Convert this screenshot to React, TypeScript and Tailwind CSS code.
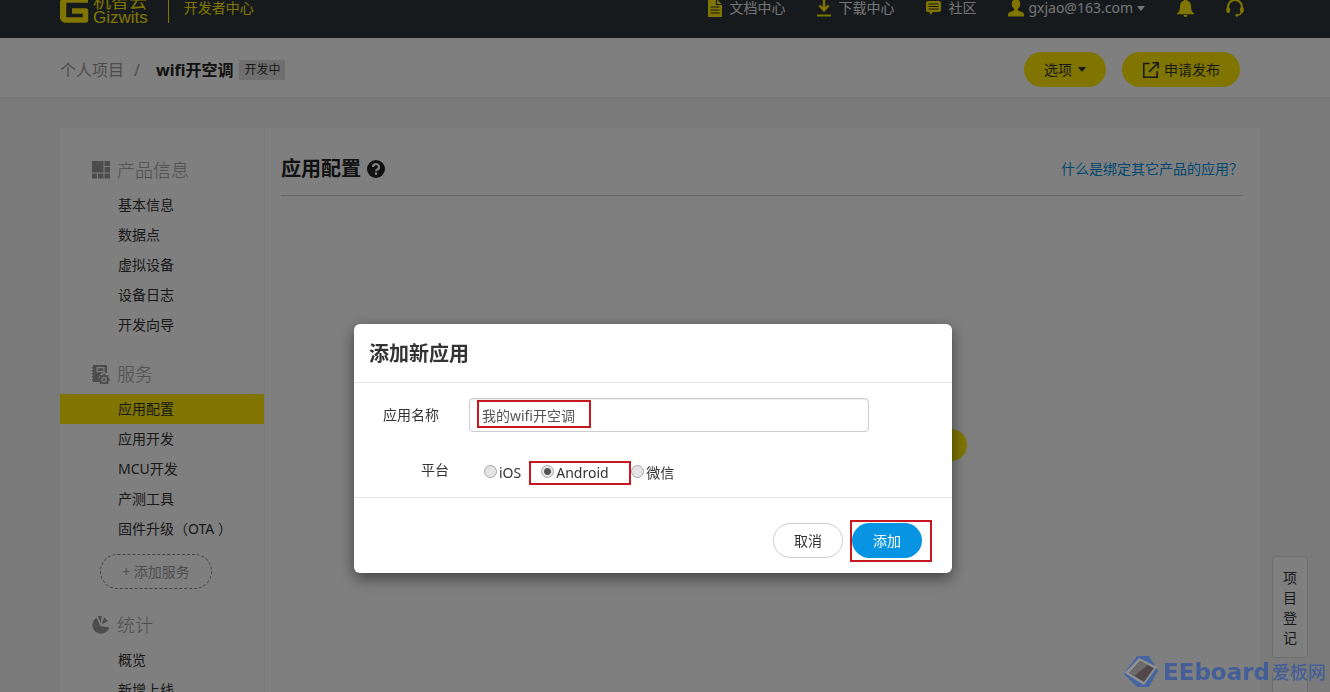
import React, { useState } from "react";

interface NavSection {
  title: string;
  icon: React.ReactNode;
  items: string[];
  canAdd?: boolean;
}

const GridIcon = () => (
  <svg width="18" height="18" viewBox="0 0 18 18" fill="currentColor">
    <rect x="0" y="0" width="11.500" height="11.500" />
    <rect x="12.500" y="0" width="5.500" height="5" />
    <rect x="12.500" y="6" width="5.500" height="5.500" />
    <rect x="0" y="12.500" width="5" height="5" />
    <rect x="6" y="12.500" width="5.500" height="5" />
    <rect x="12.500" y="12.500" width="5.500" height="5" />
  </svg>
);

const ServiceIcon = () => (
  <svg width="18" height="19" viewBox="0 0 18 19" fill="currentColor">
    <path d="M1 0h14v8.2a5.6 5.6 0 0 0-6.6 8.8H1v-1.5H0V14h1v-1.5H0V11h1V9.500H0V8h1V6.500H0V5h1V3.500H0V2h1z M4.500 2v5.200h8V2z M5.700 3.200h5.600v2.800H5.700z" fillRule="evenodd" />
    <path d="M11.200 8.800h1.800l.3 1.300 1.200.5 1.200-.7 1.200 1.200-.7 1.200.5 1.100 1.300.4v1.700l-1.300.4-.5 1.100.6 1.100-1.200 1.200-1.100-.7-1.200.5-.3 1.300h-1.800l-.4-1.300-1.100-.5-1.100.6-1.200-1.200.7-1.100-.5-1.100-1.300-.4v-1.700l1.300-.4.5-1.100-.7-1.200 1.200-1.200 1.200.7 1.100-.5z M12.100 11.700a2.800 2.800 0 1 0 0 5.600 2.800 2.800 0 0 0 0-5.600z" fillRule="evenodd" />
    <circle cx="12.100" cy="14.500" r="1.500" />
  </svg>
);

const StatsIcon = () => (
  <svg width="18" height="19" viewBox="0 0 18 19" fill="currentColor">
    <path d="M4.500 1.800 8.300 10l9 1.400A8.600 8.600 0 1 1 4.500 1.800z" />
    <path d="M5.800 0h4L8.600 7z" />
    <path d="M12.200 1.200 16 5 9.600 8.600z" />
  </svg>
);

const DocIcon = () => (
  <svg width="14" height="18" viewBox="0 0 14 18">
    <path d="M0 0h8.500L14 5.500V18H0z" fill="#ffea00" />
    <path d="M8.500 0v5.500H14 M2.500 8h9 M2.500 11h9 M2.500 14h9" stroke="#2d3439" strokeWidth="1.200" fill="none" />
  </svg>
);

const DownloadIcon = () => (
  <svg width="14" height="18" viewBox="0 0 14 18" fill="none" stroke="#ffea00">
    <path d="M7 0v11 M2.300 6.500 7 11.200l4.700-4.700" strokeWidth="2.400" />
    <path d="M0 16.500h14" strokeWidth="2" />
  </svg>
);

const ChatIcon = () => (
  <svg width="15" height="14" viewBox="0 0 15 14">
    <path d="M2 0h11a2 2 0 0 1 2 2v7a2 2 0 0 1-2 2H7l-2.500 3L3.500 11H2a2 2 0 0 1-2-2V2a2 2 0 0 1 2-2z" fill="#ffea00" />
    <path d="M2.500 3h10 M2.500 5.500h10 M2.500 8h10" stroke="#2d3439" strokeWidth="1" />
  </svg>
);

const UserIcon = () => (
  <svg width="16" height="18" viewBox="0 0 16 18" fill="#ffea00">
    <ellipse cx="8" cy="5" rx="4.300" ry="5" />
    <path d="M6 8h4v3.500l4.500 1.700c1 .5 1.500 1.300 1.500 2.600V17.500H0v-1.700c0-1.300.5-2.100 1.500-2.600L6 11.500z" />
  </svg>
);

const BellIcon = () => (
  <svg width="17" height="18" viewBox="0 0 17 18" fill="#ffea00">
    <path d="M8.500 0a1.500 1.500 0 0 1 1.400 1.500C12.500 2 14 4.200 14 7c0 4 .8 6 3 7.200v1H0v-1C2.200 13 3 11 3 7c0-2.800 1.500-5 4.100-5.500A1.500 1.500 0 0 1 8.500 0z" />
    <path d="M6.500 16h4a2 2 0 0 1-4 0z" />
  </svg>
);

const HeadsetIcon = () => (
  <svg width="18" height="18" viewBox="0 0 18 18" fill="none" stroke="#ffea00">
    <path d="M2 10.500V8a7 7 0 0 1 14 0v2.500" strokeWidth="2" />
    <rect x=".8" y="8.500" width="2.800" height="5" rx="1" fill="#ffea00" strokeWidth="1" />
    <rect x="14.400" y="8.500" width="2.800" height="5" rx="1" fill="#ffea00" strokeWidth="1" />
    <path d="M15.500 13.500c-.6 1.700-2 2.500-4.500 2.800" strokeWidth="1.400" />
    <circle cx="10.800" cy="16.300" r="1" fill="#ffea00" />
  </svg>
);

const Caret = () => (
  <svg width="8" height="5" viewBox="0 0 8 5" fill="currentColor">
    <path d="M0 0h8L4 5z" />
  </svg>
);

const sections: NavSection[] = [
  {
    title: "产品信息",
    icon: <GridIcon />,
    items: ["基本信息", "数据点", "虚拟设备", "设备日志", "开发向导"],
  },
  {
    title: "服务",
    icon: <ServiceIcon />,
    items: ["应用配置", "应用开发", "MCU开发", "产测工具", "固件升级（OTA ）"],
    canAdd: true,
  },
  {
    title: "统计",
    icon: <StatsIcon />,
    items: ["概览", "新增上线"],
  },
];

const radioClass =
  "w-[13px] h-[13px] mb-1 shrink-0 appearance-none rounded-full border border-[#a8a8a8] bg-[#e4e4e4] checked:bg-[radial-gradient(circle,#555_0,#555_3px,#e4e4e4_4px)]";

function Header() {
  return (
    <header className="h-[38px] shrink-0 overflow-hidden bg-[#2d3439] flex items-end">
      <div className="h-[60px] w-full shrink-0 flex items-center justify-between pl-[60px] pr-[86px]">
        <div className="flex items-center text-[#ffea00]">
          <a href="#home" className="flex items-center gap-1">
            <svg width="29" height="30" viewBox="0 0 29 30" fill="none" stroke="#ffea00" strokeWidth="5.500">
              <path d="M28 7H5a2 2 0 0 0-2 2v16a2 2 0 0 0 2 2H25.500V18H12" strokeLinejoin="round" />
              <path d="M3 8v18" strokeWidth="6.500" />
            </svg>
            <span className="flex flex-col">
              <span className="text-[18px] leading-5">机智云</span>
              <span className="text-[17px] leading-[14px] font-light font-['Liberation_Sans',sans-serif]">Gizwits</span>
            </span>
          </a>
          <span className="w-px h-[30px] bg-[#ffea00] ml-5 mr-[15px]" />
          <a href="#center" className="text-sm leading-4">开发者中心</a>
        </div>
        <nav className="flex items-center gap-8 text-sm leading-4 text-[#e8e8e8]">
          <a href="#docs" className="flex items-center gap-[7px]"><DocIcon />文档中心</a>
          <a href="#download" className="flex items-center gap-[7px]"><DownloadIcon />下载中心</a>
          <a href="#community" className="flex items-center gap-[7px]"><ChatIcon />社区</a>
          <button className="flex items-center gap-1">
            <UserIcon />
            gxjao@163.com
            <Caret />
          </button>
          <button aria-label="通知"><BellIcon /></button>
          <button aria-label="客服"><HeadsetIcon /></button>
        </nav>
      </div>
    </header>
  );
}

function ProjectBar() {
  return (
    <div className="h-[60px] shrink-0 bg-white border-b border-[#ececec] flex items-center justify-between pl-[60px] pr-[90px] pt-1">
      <div className="flex items-center text-base">
        <a href="#projects" className="text-[#999]">个人项目</a>
        <span className="ml-[10px] mr-4 text-[#999]">/</span>
        <span className="font-bold text-[#222]">wifi开空调</span>
        <span className="ml-[6px] h-5 px-[5px] bg-[#dedede] text-xs leading-5 text-[#333]">开发中</span>
      </div>
      <div className="flex items-center gap-4 text-sm text-[#333]">
        <button className="h-[35px] px-5 rounded-full bg-[#ffea00] flex items-center gap-[6px]">
          选项
          <Caret />
        </button>
        <button className="h-[35px] px-5 rounded-full bg-[#ffea00] flex items-center gap-1">
          <svg width="18" height="18" viewBox="0 0 18 18" fill="none" stroke="currentColor" strokeWidth="1.600">
            <path d="M7.500 2.500H1.800v13.700h13.400v-6 M10.500 1.800h5.700v5.700 M16 2 7 11" />
          </svg>
          申请发布
        </button>
      </div>
    </div>
  );
}

function Sidebar() {
  return (
    <aside className="w-[205px] shrink-0 pt-[22px] border-r border-[#f2f2f2] flex flex-col gap-[14px]">
      {sections.map((section) => (
        <section key={section.title}>
          <h2 className="h-10 pl-8 flex items-center gap-[7px] text-lg font-light text-[#999]">
            {section.icon}
            {section.title}
          </h2>
          <ul className="text-sm text-[#333]">
            {section.items.map((item) => (
              <li key={item}>
                <a
                  href="#item"
                  className={`block h-[30px] pl-[58px] leading-[30px] whitespace-nowrap ${
                    item === "应用配置" ? "bg-[#ffea00]" : ""
                  }`}
                >
                  {item}
                </a>
              </li>
            ))}
          </ul>
          {section.canAdd && (
            <button className="mt-[10px] mb-[2px] ml-10 h-[35px] w-[112px] rounded-full border border-dashed border-[#888] text-sm text-[#999]">
              + 添加服务
            </button>
          )}
        </section>
      ))}
    </aside>
  );
}

function AddAppDialog() {
  const [name, setName] = useState("我的wifi开空调");
  const [platform, setPlatform] = useState("Android");

  return (
    <div
      role="dialog"
      aria-labelledby="dialog-title"
      className="w-[598px] rounded-md bg-white text-sm text-[#333] shadow-[0_5px_15px_rgba(0,0,0,0.5)]"
    >
      <div className="h-[59px] px-[15px] pt-px flex items-center border-b border-[#e5e5e5]">
        <h2 id="dialog-title" className="text-xl font-bold">添加新应用</h2>
      </div>

      <div className="h-[115px] pt-[15px] border-b border-[#e5e5e5]">
        <div className="flex items-center">
          <label htmlFor="app-name" className="w-[85px] text-right">应用名称</label>
          <div className="relative ml-[30px]">
            <input
              id="app-name"
              value={name}
              onChange={(e) => setName(e.target.value)}
              className="block w-[400px] h-[34px] px-3 rounded border border-[#ccc] text-[#555] shadow-[inset_0_1px_1px_rgba(0,0,0,0.075)]"
            />
            <div className="absolute left-2 top-[2px] w-[114px] h-[28px] border-2 border-[#c8171e] pointer-events-none" />
          </div>
        </div>

        <fieldset className="mt-[29px] flex items-center">
          <legend className="sr-only">平台</legend>
          <span className="w-[95px] -mt-[6px] text-right" aria-hidden="true">平台</span>
          <div className="ml-[35px] flex items-center">
            <label className="flex items-center gap-[2px]">
              <input type="radio" name="platform" className={radioClass} checked={platform === "iOS"} onChange={() => setPlatform("iOS")} />
              iOS
            </label>
            <label className="ml-2 w-[102px] h-[24px] pl-[10px] flex items-center gap-[2px] border-2 border-[#c8171e]">
              <input type="radio" name="platform" className={radioClass} checked={platform === "Android"} onChange={() => setPlatform("Android")} />
              Android
            </label>
            <label className="flex items-center gap-[2px]">
              <input type="radio" name="platform" className={radioClass} checked={platform === "微信"} onChange={() => setPlatform("微信")} />
              微信
            </label>
          </div>
        </fieldset>
      </div>

      <div className="h-[75px] pr-5 pt-[22px] flex justify-end items-start gap-[7px]">
        <button className="mt-[3px] w-[70px] h-[35px] rounded-full border border-[#ccc]">取消</button>
        <div className="w-[82px] h-[42px] border-2 border-[#c8171e] pt-px">
          <button className="block w-[70px] h-[35px] rounded-full bg-[#0694e3] text-white">添加</button>
        </div>
      </div>
    </div>
  );
}

function Watermark() {
  return (
    <div className="fixed right-1 bottom-1 flex items-center gap-1 text-[#445f98] whitespace-nowrap pointer-events-none">
      <svg width="36" height="32" viewBox="0 0 36 32">
        <path d="M14 0h12l9 15-9 16H14L1 18z" fill="#46659f" />
        <path d="M2 17 16 2l18 9-13 18z" fill="#929292" />
        <path d="M6 17 17 5l14 7-10 14z" fill="#51474a" />
        <path d="M6 17 17 5l8 4-14 11z" fill="#6e696a" />
      </svg>
      <span className="flex items-center">
        <span className="text-[23px] leading-[32px] font-bold font-['DejaVu_Sans',sans-serif]">EEboard</span>
        <span className="ml-[2px] text-lg font-medium">爱板网</span>
      </span>
    </div>
  );
}

export default function App() {
  return (
    <div className="h-screen overflow-hidden flex flex-col bg-[#f4f4f4] font-['Noto_Sans','Noto_Sans_CJK_SC',sans-serif]">
      <Header />
      <ProjectBar />

      <div className="flex-1 pt-[30px] pl-[60px] pr-[70px]">
        <div className="bg-white flex">
          <Sidebar />
          <main className="flex-1 pl-4 pr-[17px]">
            <div className="h-[68px] pt-[14px] flex items-center justify-between border-b border-[#ccc]">
              <h1 className="flex items-center gap-[6px] text-xl font-bold text-[#222]">
                应用配置
                <svg width="18" height="18" viewBox="0 0 18 18">
                  <circle cx="9" cy="9" r="9" fill="#222" />
                  <path d="M6 7a3 2.800 0 1 1 4.300 2.400C9.400 9.900 9 10.200 9 11.200" stroke="#fff" strokeWidth="2.200" fill="none" />
                  <rect x="7.800" y="12.400" width="2.400" height="2.400" fill="#fff" />
                </svg>
              </h1>
              <a href="#help" className="text-sm text-[#0090e0]">什么是绑定其它产品的应用？</a>
            </div>
            <div className="pt-[233px] flex justify-center">
              <button aria-label="添加新应用" className="w-[410px] h-8 rounded-full bg-[#ffea00]" />
            </div>
          </main>
        </div>
      </div>

      <div className="fixed right-[22px] top-[556px] flex flex-col gap-3">
        <button className="w-9 h-[102px] px-2 pt-[2px] rounded border border-[#ddd] bg-white text-sm leading-5 text-[#333]">
          项目登记
        </button>
        <div className="w-9 h-[102px] rounded border border-[#ddd] bg-white" />
      </div>

      <div className="fixed inset-0 bg-black/50 flex justify-center items-start pt-[324px] pr-6">
        <AddAppDialog />
      </div>
      <Watermark />
    </div>
  );
}
